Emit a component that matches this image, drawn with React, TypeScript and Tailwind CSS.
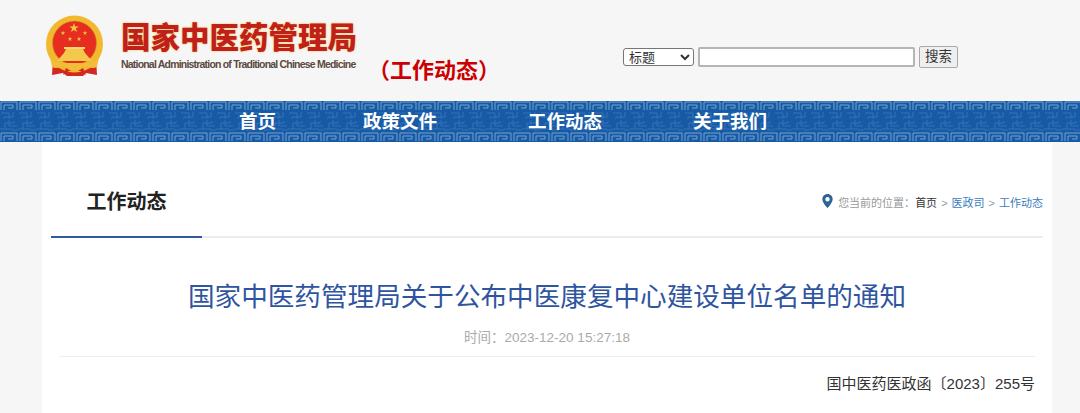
import React from 'react';

const cjk = "font-['Liberation_Sans','Noto_Sans_CJK_SC',sans-serif]";

function Emblem() {
  const star = (cx: number, cy: number, r: number) => {
    const pts: string[] = [];
    for (let i = 0; i < 10; i++) {
      const rad = i % 2 === 0 ? r : r * 0.4;
      const a = (Math.PI / 5) * i - Math.PI / 2;
      pts.push(`${cx + rad * Math.cos(a)},${cy + rad * Math.sin(a)}`);
    }
    return <polygon points={pts.join(' ')} fill="#f2c542" />;
  };
  return (
    <svg width="60" height="64" viewBox="0 0 60 64" className="shrink-0">
      {/* ribbon */}
      <path d="M8 44 L7 60 L18 58 L22 61 L38 61 L41 58 L52 60 L51 44 Z" fill="#d3281f" />
      <circle cx="29.5" cy="29" r="28.5" fill="#f2b92f" />
      <circle cx="29.5" cy="28" r="22" fill="#e62d20" />
      <circle cx="29.5" cy="28" r="22" fill="none" stroke="#c9952a" strokeWidth="0.6" />
      {star(29, 13, 5)}
      {star(18, 18, 2.4)}
      {star(40, 18, 2.4)}
      {star(25, 24, 2.4)}
      {star(34, 24, 2.4)}
      {/* gate */}
      <path d="M21 34 L38 34 L40 38 L47 46 L12 46 L19 38 Z" fill="#f4c84a" />
      <rect x="19" y="32" width="21" height="2" fill="#f6d770" />
      {/* wheat and knot */}
      <path d="M5 42 C12 50 17 47 22 48 L37 48 C42 47 47 50 54 42 L52 52 C46 55 42 50 38 52 L33 55 L26 55 L21 52 C17 50 13 55 7 52 Z" fill="#f2bd3a" />
      <path d="M18 60 L21 53 L26 56 L33 56 L38 53 L41 60 L35 56 L24 56 Z" fill="#d3281f" />
    </svg>
  );
}

function NavPattern() {
  return (
    <svg className="absolute inset-0 h-full w-full" aria-hidden="true">
      <defs>
        <pattern id="topKey" width="19" height="10" patternUnits="userSpaceOnUse">
          <path d="M1 9 V1 H17 V9 M4 9 V4 H13 V7 H8" fill="none" stroke="#76a1d0" strokeWidth="1" />
        </pattern>
        <pattern id="midKey" width="18" height="19" patternUnits="userSpaceOnUse">
          <path d="M0 9 H5 V3 H14 V1 M9 0 V6 H17 M9 18 V12 H1 M18 10 H13 V16 H4 V18 M5 9 H13" fill="none" stroke="#3472b8" strokeWidth="1" />
        </pattern>
      </defs>
      <rect x="0" y="0" width="100%" height="10" fill="url(#topKey)" />
      <rect x="0" y="11" width="100%" height="19" fill="url(#midKey)" />
      <g transform="translate(0 31)">
        <rect x="0" y="0" width="100%" height="10" fill="url(#topKey)" />
      </g>
    </svg>
  );
}

export default function App() {
  return (
    <div className={`h-[413px] w-[1080px] overflow-hidden bg-[#f6f6f6] ${cjk}`}>
      {/* header */}
      <header className="flex h-[101px] items-start pl-[45px]">
        <div className="mt-[15px]">
          <Emblem />
        </div>
        <div className="ml-[16px] mt-[20px] w-[240px]">
          <div className="text-[29.5px] leading-[36px] font-black whitespace-nowrap text-[#c0201c] [text-shadow:0_0_2px_#f4b62a]">
            国家中医药管理局
          </div>
          <div className="mt-[1px] text-[10.5px] leading-[14px] font-bold tracking-[-0.8px] whitespace-nowrap text-[#5a4a40]">
            National Administration of Traditional Chinese Medicine
          </div>
        </div>
        <div className="mt-[56px] ml-[7px] w-[130px] text-[22px] leading-[30px] font-bold whitespace-nowrap text-[#cc0000]">
          （工作动态）
        </div>
        <form className="mt-[46px] ml-[125px] flex items-center gap-[4px]">
          <select className="h-[18px] w-[71px] rounded-[3px] border border-[#767676] bg-white pl-[1px] text-[13px] leading-[16px] text-[#333]">
            <option>标题</option>
          </select>
          <input className="h-[20px] w-[217px] rounded-[2px] border-2 border-[#b5b5b5] bg-white" />
          <button type="button" className="h-[22px] w-[39px] rounded-[2px] border border-[#aaa] bg-[#efefef] text-[13.5px] leading-[20px] text-[#333]">
            搜索
          </button>
        </form>
      </header>

      {/* nav */}
      <nav className="relative h-[41px] bg-[#175aa5]">
        <NavPattern />
        <ul className="relative flex h-full items-center pl-[239px] text-[18.5px] font-bold text-white">
          <li>首页</li>
          <li className="ml-[87px]">政策文件</li>
          <li className="ml-[91px]">工作动态</li>
          <li className="ml-[91px]">关于我们</li>
        </ul>
      </nav>

      {/* card */}
      <main className="mx-[42px] h-[271px] w-[1010px] bg-white px-[9px]">
        <div className="relative flex h-[96px] items-end justify-between border-b-2 border-[#ececec]">
          <div className="-mb-[2px] flex h-[96px] w-[151px] items-center justify-center border-b-2 border-[#2f5a9e] pt-[26px] text-[20px] font-bold text-[#222]">
            工作动态
          </div>
          <div className="mb-[25px] flex items-center text-[11px] leading-[16px] text-[#999]">
            <svg width="11" height="14" viewBox="0 0 11 14" className="mr-[5px] mb-[3px]">
              <path fillRule="evenodd" d="M5.5 0 C2.5 0 .3 2.3 .3 5.2 C.3 8.6 5.5 14 5.5 14 C5.5 14 10.7 8.6 10.7 5.2 C10.7 2.3 8.5 0 5.5 0 Z M5.5 3 A2.2 2.2 0 1 1 5.5 7.4 A2.2 2.2 0 1 1 5.5 3 Z" fill="#2f6496" />
            </svg>
            <span>您当前的位置：</span>
            <span className="text-[#333]">首页</span>
            <span className="mx-[4px]">&gt;</span>
            <span className="text-[#3a7cc0]">医政司</span>
            <span className="mx-[4px]">&gt;</span>
            <span className="text-[#3a7cc0]">工作动态</span>
          </div>
        </div>

        <article className="mx-[8px]">
          <h1 className="mt-[39px] text-center text-[26.6px] leading-[40px] whitespace-nowrap text-[#2f55a0]">
            国家中医药管理局关于公布中医康复中心建设单位名单的通知
          </h1>
          <div className="mt-[11px] border-b border-[#eeeeee] pb-[8px] text-center text-[13.5px] leading-[20px] text-[#aaaaaa]">
            时间：2023-12-20 15:27:18
          </div>
          <p className="mt-[17px] text-right text-[15px] leading-[20px] text-[#333]">
            国中医药医政函〔2023〕255号
          </p>
        </article>
      </main>
    </div>
  );
}
